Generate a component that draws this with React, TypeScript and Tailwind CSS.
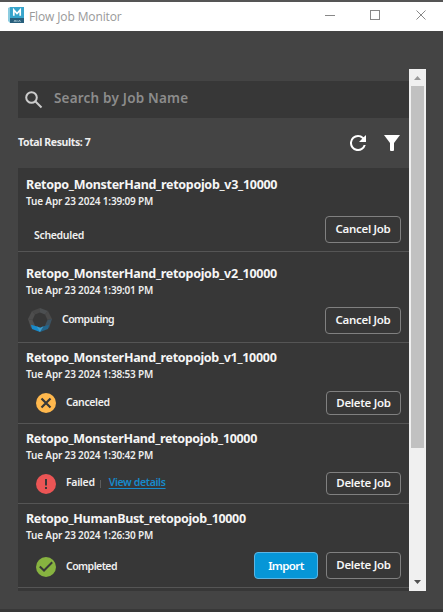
import React from "react";

type Status = "Scheduled" | "Computing" | "Canceled" | "Failed" | "Completed";

interface Job {
  name: string;
  nameClass: string;
  date: string;
  status: Status;
  statusClass: string;
  labelClass: string;
  action: string;
  rowClass: string;
  footClass: string;
  buttonClass: string;
}

const jobs: Job[] = [
  { name: "Retopo_MonsterHand_retopojob_v3_10000", nameClass: "tracking-[-0.29px]", date: "Tue Apr 23 2024 1:39:09 PM", status: "Scheduled", statusClass: "pl-[8px] pt-[13px]", labelClass: "tracking-[-0.32px]", action: "Cancel Job", rowClass: "h-[84px] pt-[8px]", footClass: "h-[27px] mt-[6px]", buttonClass: "h-[27px] w-[76px]" },
  { name: "Retopo_MonsterHand_retopojob_v2_10000", nameClass: "tracking-[-0.3px]", date: "Tue Apr 23 2024 1:39:01 PM", status: "Computing", statusClass: "pl-[2px] gap-[10px]", labelClass: "pb-px tracking-[-0.55px]", action: "Cancel Job", rowClass: "h-[91px] pt-[13px]", footClass: "h-[27px] mt-[8px]", buttonClass: "h-[27px] w-[76px]" },
  { name: "Retopo_MonsterHand_retopojob_v1_10000", nameClass: "tracking-[-0.31px]", date: "Tue Apr 23 2024 1:38:53 PM", status: "Canceled", statusClass: "pl-[10px] gap-[10px]", labelClass: "pb-px tracking-[-0.38px]", action: "Delete Job", rowClass: "h-[81px] pt-[6px]", footClass: "h-[24px] mt-[8px]", buttonClass: "h-[24px] w-[75px]" },
  { name: "Retopo_MonsterHand_retopojob_10000", nameClass: "tracking-[-0.34px]", date: "Tue Apr 23 2024 1:30:42 PM", status: "Failed", statusClass: "pl-[10px] gap-[10px]", labelClass: "pb-px tracking-[-0.3px]", action: "Delete Job", rowClass: "h-[80px] pt-[6px]", footClass: "h-[23px] mt-[8px]", buttonClass: "h-[23px] w-[75px]" },
  { name: "Retopo_HumanBust_retopojob_10000", nameClass: "tracking-[-0.34px]", date: "Tue Apr 23 2024 1:26:30 PM", status: "Completed", statusClass: "pl-[10px] gap-[10px] pt-[2px]", labelClass: "tracking-[-0.55px]", action: "Delete Job", rowClass: "h-[84px] pt-[6px]", footClass: "h-[27px] mt-[8px]", buttonClass: "h-[27px] w-[75px]" },
];

function StatusIcon({ status }: { status: Status }) {
  if (status === "Scheduled") return null;
  if (status === "Computing")
    return (
      <svg width="24" height="24" viewBox="0 0 24 24" className="mb-px shrink-0">
        <path d="M12 0 20 3 17 6.5 12 4.5Z" fill="#4c4f51" />
        <path d="M12 0 4 3 7 6.5 12 4.5Z" fill="#484848" />
        <path d="M4 3 0 11 4.5 12 7 6.5Z" fill="#4d4d4d" />
        <path d="M20 3 24 11 19.5 12 17 6.5Z" fill="#4a4a4a" />
        <path d="M0 11 3 20 7 17.5 4.5 12Z" fill="#505050" />
        <path d="M24 11 21 20 17 17.5 19.5 12Z" fill="#3d5362" />
        <path d="M3 16.8 4 21 12 24V19.5L7.5 18Z" fill="#168acb" />
        <path d="M21 16.8 20 21 12 24V19.5L16.5 18Z" fill="#23658c" />
        <path d="M8.5 18.2 12 20 15.5 18.2 12 24Z" fill="#3f9bc8" />
      </svg>
    );
  const color = status === "Canceled" ? "#ffb84d" : status === "Failed" ? "#eb5555" : "#87b340";
  return (
    <svg width="20" height="20" viewBox="0 0 20 20" className="shrink-0">
      <circle cx="10" cy="10" r="10" fill={color} />
      {status === "Canceled" && <path d="M5.5 5.5 14.5 14.5M14.5 5.5 5.5 14.5" stroke="#383838" strokeWidth="2.2" />}
      {status === "Failed" && <path d="M10 5V11.5M10 13V15" stroke="#383838" strokeWidth="2" />}
      {status === "Completed" && <path d="M3.8 9.5 8 13.5 16.2 5.3" fill="none" stroke="#383838" strokeWidth="2" />}
    </svg>
  );
}

function JobRow({ job }: { job: Job }) {
  return (
    <div className={"flex flex-col border-b border-[#555] pl-[8px] pr-[8px] " + job.rowClass}>
      <div className={"h-[17px] shrink-0 whitespace-nowrap text-[12.5px] font-bold leading-[18px] text-[#f5f5f5] " + job.nameClass}>{job.name}</div>
      <div className="mb-px h-[16px] shrink-0 whitespace-nowrap text-[10px] font-semibold leading-[16px] tracking-[-0.17px] text-[#eee]">{job.date}</div>
      <div className={"flex shrink-0 items-center " + job.footClass}>
        <div className={"flex items-center text-[10.5px] font-semibold text-[#f0f0f0] " + job.statusClass}>
          <StatusIcon status={job.status} />
          <span className={job.labelClass}>{job.status}</span>
        </div>
        {job.status === "Failed" && (
          <>
            <span className="ml-[5px] h-[8px] w-px bg-[#5c5c5c]" />
            <span className="ml-[8px] pb-px text-[10.5px] font-semibold tracking-[-0.36px] text-[#168acb] underline underline-offset-2">View details</span>
          </>
        )}
        <div className="ml-auto flex gap-[8px]">
          {job.status === "Completed" && (
            <button className="h-[27px] w-[64px] rounded-[4px] border border-[#5cb5e4] bg-[#0696d7] text-[11.5px] font-semibold leading-none tracking-[-0.6px] text-white">Import</button>
          )}
          <button className={"whitespace-nowrap rounded-[4px] border border-[#808080] pb-px text-[11.5px] font-semibold leading-none tracking-[-0.3px] text-[#f5f5f5] " + job.buttonClass}>{job.action}</button>
        </div>
      </div>
    </div>
  );
}

export default function App() {
  return (
    <div className="flex h-[612px] w-[443px] flex-col overflow-hidden border-b-[3px] border-t-2 border-b-[#383838] border-t-[#555] bg-[#444] font-['Noto_Sans',sans-serif]">
      <header className="flex h-[29px] shrink-0 items-center bg-white pl-[8px]">
        <svg className="mb-[2px]" width="16" height="17" viewBox="0 0 16 17">
          <path d="M0 1 2 0V16L0 14Z" fill="#8ccce0" />
          <rect x="2" width="14" height="11" fill="#38a5cc" />
          <rect x="2" y="11" width="14" height="5" fill="#285f7c" />
          <path d="M5.8 8.8V3L9 6.5 12.2 3V8.8" fill="none" stroke="#fff" strokeWidth="1.7" />
          <path d="M6 15 7 13 8 15M9 13V15M10.5 15 11.5 13 12.5 15" fill="none" stroke="#b7d3de" strokeWidth=".7" />
        </svg>
        <span className="ml-[5px] font-['Open_Sans',sans-serif] text-[12px] tracking-[-0.12px] text-[#999]">Flow Job Monitor</span>
        <svg className="mb-[3px] ml-auto mr-[15px]" width="103" height="12" viewBox="0 0 103 12" fill="none" stroke="#888" shapeRendering="crispEdges">
          <path d="M0 6.5H10M45.5 1.5H54.5V10.5H45.5Z" />
          <path d="M91.5 1.5 100.5 10.5M100.5 1.5 91.5 10.5" shapeRendering="auto" />
        </svg>
      </header>
      <main className="ml-[18px] mt-[38px] flex h-[522px] w-[408px] shrink-0">
        <div className="flex w-[391px] flex-col pt-[12px]">
          <div className="flex h-[37px] shrink-0 items-center bg-[#373737] pl-[7px]">
            <svg width="18" height="18" viewBox="0 0 18 18" fill="none" stroke="#ccc" strokeWidth="2">
              <circle cx="6.5" cy="6.5" r="5.3" />
              <path d="M10.5 10.5 16.5 16.5" />
            </svg>
            <span className="ml-[11px] pb-[2px] text-[13.5px] font-semibold tracking-[0.2px] text-[#8c8c8c]">Search by Job Name</span>
          </div>
          <div className="flex h-[50px] shrink-0 items-center pr-[9px]">
            <span className="text-[10.5px] font-bold tracking-[-0.38px] text-[#eee]">Total Results: 7</span>
            <svg className="ml-auto" width="16" height="16" viewBox="4 4 16 16" fill="#fff">
              <path d="M17.65 6.35A7.96 7.96 0 0 0 12 4a8 8 0 1 0 7.73 10h-2.08A6 6 0 1 1 12 6c1.66 0 3.14.69 4.22 1.78L13 11h7V4z" />
            </svg>
            <svg className="ml-[18px]" width="16" height="16" viewBox="0 0 16 16" fill="#fff">
              <path d="M0 0H16L10 8V15Q10 16 9 16H7Q6 16 6 15V8Z" />
            </svg>
          </div>
          <div className="min-h-0 flex-1 overflow-hidden bg-[#373737]">
            {jobs.map((job) => <JobRow key={job.name} job={job} />)}
          </div>
        </div>
        <div className="flex w-[17px] flex-col items-center bg-[#f0f0f0]">
          <svg className="shrink-0" width="17" height="17" viewBox="0 0 17 17"><path d="M5 11H12L8.5 7Z" fill="#999" /></svg>
          <div className="h-[362px] w-[13px] bg-[#c1c1c1]" />
          <svg className="mt-auto shrink-0" width="17" height="17" viewBox="0 0 17 17"><path d="M5 6H12L8.5 10Z" fill="#505050" /></svg>
        </div>
      </main>
    </div>
  );
}
